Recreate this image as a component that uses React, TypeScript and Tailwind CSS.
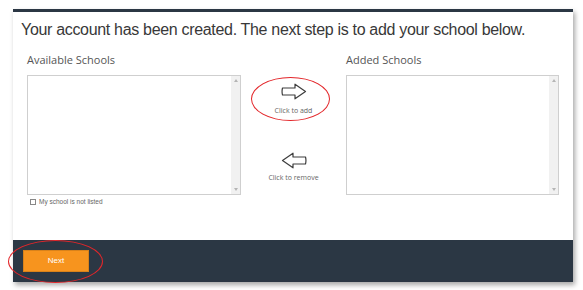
import React from 'react'

const ArrowRight = () => (
  <svg width="26" height="17" viewBox="0 0 26 17" fill="none">
    <path
      d="M1.5 5 H14 V1.2 L24.5 8.5 L14 15.8 V12 H1.5 Q0.6 8.5 1.5 5 Z"
      stroke="#3d3d3d"
      strokeWidth="1.2"
      strokeLinejoin="round"
    />
  </svg>
)

const ArrowLeft = () => (
  <svg width="26" height="17" viewBox="0 0 26 17" fill="none">
    <path
      d="M24.5 5 H12 V1.2 L1.5 8.5 L12 15.8 V12 H24.5 Q25.4 8.5 24.5 5 Z"
      stroke="#3d3d3d"
      strokeWidth="1.2"
      strokeLinejoin="round"
    />
  </svg>
)

const ListBox = () => (
  <div className="flex h-[120px] border border-[#cfcfcf] bg-white">
    <div className="flex-1" />
    <div className="flex w-[9px] flex-col items-center justify-between bg-[#f1f1f1] py-[3px]">
      <span className="h-0 w-0 border-x-[2.5px] border-b-[3px] border-x-transparent border-b-[#b5b5b5]" />
      <span className="h-0 w-0 border-x-[2.5px] border-t-[3px] border-x-transparent border-t-[#b5b5b5]" />
    </div>
  </div>
)

export default function App() {
  return (
    <div className="min-h-screen bg-white pl-[13px] pt-[9px]">
      <div className="relative w-[560px] border-t-[3px] border-[#2b3744] bg-white shadow-[2px_3px_5px_rgba(0,0,0,0.35)]">
        {/* heading */}
        <h1 className="pl-2 pt-[8px] font-['Liberation_Sans',Arial,sans-serif] text-[16px] leading-[20px] tracking-[-0.32px] text-[#383838]">
          Your account has been created. The next step is to add your school below.
        </h1>

        {/* school pickers */}
        <div className="mt-[13px] flex px-[14px] font-['Open_Sans',sans-serif]">
          <div className="w-[214px]">
            <p className="mb-[8px] text-[11px] leading-[14px] text-[#555]">Available Schools</p>
            <ListBox />
            <label className="mt-[3px] flex items-center gap-[3px] pl-[3px] font-['Liberation_Sans',Arial,sans-serif] text-[6.5px] leading-[8px] text-[#666]">
              <span className="h-[6px] w-[6px] border border-[#888] bg-white" />
              My school is not listed
            </label>
          </div>

          <div className="flex w-[105px] flex-col items-center pt-[30px] text-[7px] leading-[9px] text-[#666]">
            <ArrowRight />
            <span className="mt-[6px]">Click to add</span>
            <div className="mt-[37px]">
              <ArrowLeft />
            </div>
            <span className="mt-[4px]">Click to remove</span>
          </div>

          <div className="w-[213px]">
            <p className="mb-[8px] text-[11px] leading-[14px] text-[#555]">Added Schools</p>
            <ListBox />
          </div>
        </div>

        {/* footer */}
        <div className="mt-[34px] flex h-[42px] items-start bg-[#2b3744] px-[10px] pt-[10px]">
          <button className="h-[22px] w-[66px] border border-[#d9821a] bg-[#f7941e] font-['Liberation_Sans',Arial,sans-serif] text-[8px] leading-[20px] text-white">
            Next
          </button>
        </div>

        {/* annotation ellipses */}
        <div className="pointer-events-none absolute left-[238px] top-[65px] h-[44px] w-[79px] rounded-[50%] border-[1.5px] border-[#e3262a]" />
        <div className="pointer-events-none absolute left-[-5px] top-[228px] h-[43px] w-[95px] rounded-[50%] border-[1.5px] border-[#e3262a]" />
      </div>
    </div>
  )
}
